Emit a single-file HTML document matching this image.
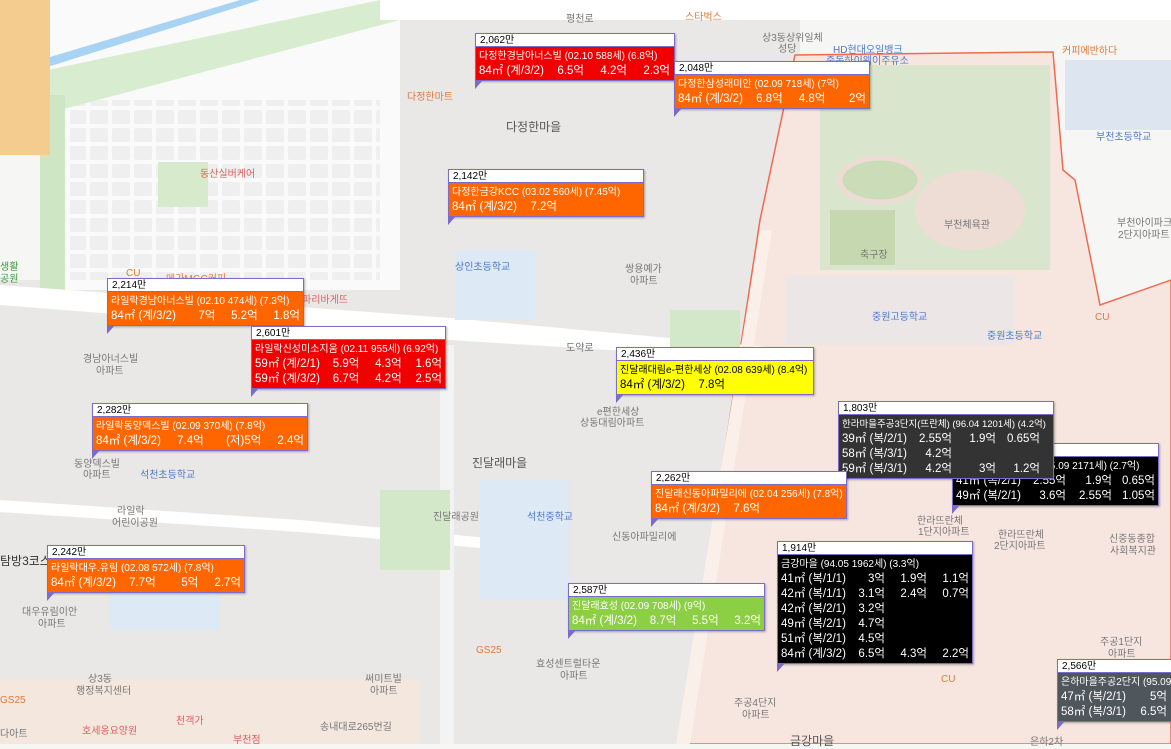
<!DOCTYPE html>
<html><head><meta charset="utf-8">
<style>
*{margin:0;padding:0;box-sizing:border-box}
body{width:1171px;height:744px;overflow:hidden;position:relative;background:#f6f6f5;font-family:"Liberation Sans","Noto Sans CJK KR",sans-serif}
svg{position:absolute;left:0;top:0}
.t{position:absolute;font-size:10px;color:#777;white-space:nowrap}
.tb{position:absolute;font-size:12px;color:#555;white-space:nowrap}
.b{position:absolute;border:1px solid #7a6cc8;box-shadow:1px 1px 2px rgba(0,0,0,.3)}
.b .h{background:#fff;color:#000;font-size:10px;height:13px;line-height:13px;padding-left:4px;border-bottom:1px solid #7a6cc8}
.b .c{padding:2px 3px 1px;color:#fff;font-size:10px;line-height:15px}
.b .r{display:flex;font-size:11.5px;line-height:15px;white-space:nowrap}
.b .r span{display:block;text-align:right}
.b .r span:first-child{text-align:left}
.b .ti{white-space:nowrap;overflow:hidden;font-size:10px}
.b:after{content:"";position:absolute;left:-1px;bottom:-9px;border-right:8px solid transparent;border-top:9px solid #7a6cc8}
</style></head><body>
<svg width="1171" height="744">
 <defs>
  <pattern id="blk" x="0" y="0" width="22" height="18" patternUnits="userSpaceOnUse">
   <rect x="2" y="2" width="18" height="14" rx="2" fill="#efefef"/>
  </pattern>
 </defs>
 <rect x="400" y="0" width="400" height="744" fill="#e9e8e6"/>
 <rect x="0" y="280" width="420" height="464" fill="#e9e8e6"/>
 <rect x="50" y="0" width="350" height="290" fill="#fafafa"/>
 <rect x="70" y="100" width="310" height="180" fill="url(#blk)"/>
 <polygon points="0,80 380,0 400,0 400,20 60,110 0,130" fill="#d8ecd0"/>
 <polygon points="0,72 240,0 260,0 0,82" fill="#a9d3f2"/>
 <rect x="40" y="95" width="25" height="200" fill="#cfe6c4"/>
 <rect x="0" y="0" width="50" height="155" fill="#f5cc8f"/>
 <rect x="158" y="162" width="50" height="45" fill="#d7ebcc"/>
 <polygon points="795,55 1053,52 1063,170 1075,180 1100,305 1171,280 1171,744 680,744 760,220" fill="#f7e6e0" stroke="#f06a50" stroke-width="1.5"/>
 <rect x="820" y="65" width="230" height="205" fill="#d9e5cc"/>
 <ellipse cx="970" cy="210" rx="55" ry="40" fill="#eeddd4"/>
 <ellipse cx="880" cy="180" rx="40" ry="22" fill="#cbdcb8" stroke="#eedcd4" stroke-width="5"/>
 <rect x="830" y="210" width="65" height="55" fill="#c5d8b0"/>
 <rect x="785" y="275" width="230" height="70" fill="#ece6e6"/>
 <rect x="1065" y="60" width="106" height="70" fill="#dde6f0"/>
 <polygon points="0,285 450,318 800,350 800,362 450,340 0,305" fill="#fff"/>
 <polygon points="0,500 300,520 560,545 560,555 300,532 0,512" fill="#fff"/>
 <rect x="380" y="0" width="800" height="20" fill="#fff"/>
 <polygon points="760,230 772,230 690,744 676,744" fill="#fbefea"/>
 <rect x="440" y="345" width="14" height="399" fill="#f3f3f3"/>
 <rect x="110" y="590" width="110" height="40" fill="#dde9f5"/>
 <rect x="480" y="480" width="90" height="120" fill="#dde9f5"/>
 <rect x="380" y="490" width="70" height="80" fill="#d3e8c8"/>
 <rect x="455" y="250" width="80" height="70" fill="#dde9f5"/>
 <rect x="670" y="310" width="70" height="40" fill="#d3e8c8"/>
 <rect x="0" y="680" width="420" height="64" fill="#f4e7de"/>
</svg>
<div class="t" style="left:566px;top:10px">평천로</div>
<div class="t" style="left:685px;top:8px;color:#e07a3a">스타벅스</div>
<div class="t" style="left:762px;top:29px">상3동상위일체</div>
<div class="t" style="left:778px;top:40px">성당</div>
<div class="t" style="left:833px;top:41px;color:#4a7ac8">HD현대오일뱅크</div>
<div class="t" style="left:826px;top:52px;color:#4a7ac8">중동하이웨이주유소</div>
<div class="t" style="left:1062px;top:42px;color:#e07a3a">커피에반하다</div>
<div class="t" style="left:1096px;top:128px;color:#4a7ac8">부천초등학교</div>
<div class="t" style="left:944px;top:216px">부천체육관</div>
<div class="t" style="left:860px;top:246px">축구장</div>
<div class="t" style="left:1117px;top:214px">부천아이파크</div>
<div class="t" style="left:1118px;top:226px">2단지아파트</div>
<div class="t" style="left:872px;top:308px;color:#4a7ac8">중원고등학교</div>
<div class="t" style="left:987px;top:327px;color:#4a7ac8">중원초등학교</div>
<div class="t" style="left:1095px;top:312px;color:#e07a3a">CU</div>
<div class="t" style="left:407px;top:88px;color:#e07a3a">다정한마트</div>
<div class="tb" style="left:506px;top:118px">다정한마을</div>
<div class="t" style="left:200px;top:165px;color:#e06060">동산실버케어</div>
<div class="t" style="left:455px;top:258px;color:#4a7ac8">상인초등학교</div>
<div class="t" style="left:625px;top:260px">쌍용예가</div>
<div class="t" style="left:630px;top:272px">아파트</div>
<div class="t" style="left:126px;top:268px;color:#e07a3a">CU</div>
<div class="t" style="left:166px;top:270px;color:#e07a3a">메가MGC커피</div>
<div class="t" style="left:302px;top:291px;color:#e06060">파리바게뜨</div>
<div class="t" style="left:83px;top:350px">경남아너스빌</div>
<div class="t" style="left:96px;top:362px">아파트</div>
<div class="t" style="left:566px;top:339px">도약로</div>
<div class="t" style="left:597px;top:403px">e편한세상</div>
<div class="t" style="left:580px;top:414px">상동대림아파트</div>
<div class="tb" style="left:472px;top:454px">진달래마을</div>
<div class="t" style="left:140px;top:466px;color:#4a7ac8">석천초등학교</div>
<div class="t" style="left:74px;top:455px">동양덱스빌</div>
<div class="t" style="left:83px;top:466px">아파트</div>
<div class="t" style="left:117px;top:502px">라일락</div>
<div class="t" style="left:112px;top:514px">어린이공원</div>
<div class="t" style="left:433px;top:508px">진달래공원</div>
<div class="t" style="left:527px;top:508px;color:#4a7ac8">석천중학교</div>
<div class="t" style="left:612px;top:528px">신동아파밀리에</div>
<div class="t" style="left:0px;top:552px;font-size:12px;color:#333">탐방3코스</div>
<div class="t" style="left:22px;top:603px">대우유림이안</div>
<div class="t" style="left:38px;top:615px">아파트</div>
<div class="t" style="left:536px;top:655px">효성센트럴타운</div>
<div class="t" style="left:560px;top:667px">아파트</div>
<div class="t" style="left:476px;top:645px;color:#e07a3a">GS25</div>
<div class="t" style="left:365px;top:670px">써미트빌</div>
<div class="t" style="left:370px;top:682px">아파트</div>
<div class="t" style="left:88px;top:670px">상3동</div>
<div class="t" style="left:76px;top:682px">행정복지센터</div>
<div class="t" style="left:82px;top:722px;color:#e06060">호세옹요양원</div>
<div class="t" style="left:176px;top:712px;color:#e06060">천객가</div>
<div class="t" style="left:233px;top:731px;color:#e06060">부천점</div>
<div class="t" style="left:320px;top:718px">송내대로265번길</div>
<div class="t" style="left:0px;top:695px;color:#e07a3a">GS25</div>
<div class="t" style="left:0px;top:725px">다아트</div>
<div class="t" style="left:734px;top:694px">주공4단지</div>
<div class="t" style="left:742px;top:706px">아파트</div>
<div class="t" style="left:941px;top:674px;color:#e07a3a">CU</div>
<div class="tb" style="left:790px;top:732px">금강마을</div>
<div class="t" style="left:917px;top:512px">한라뜨란체</div>
<div class="t" style="left:918px;top:523px">1단지아파트</div>
<div class="t" style="left:998px;top:526px">한라뜨란체</div>
<div class="t" style="left:994px;top:537px">2단지아파트</div>
<div class="t" style="left:1109px;top:530px">신중동종합</div>
<div class="t" style="left:1110px;top:542px">사회복지관</div>
<div class="t" style="left:1100px;top:633px">주공1단지</div>
<div class="t" style="left:1108px;top:645px">아파트</div>
<div class="t" style="left:1030px;top:733px">은하2차</div>
<div class="t" style="left:0px;top:258px;color:#3a9a3a">생활</div>
<div class="t" style="left:0px;top:270px;color:#3a9a3a">공원</div>

<div class="b" style="left:475px;top:33px;width:200px;background:#f00000"><div class="h">2,062만</div><div class="c"><div class="ti">다정한경남아너스빌 (02.10 588세) (6.8억)</div>
<div class="r"><span style="width:62px">84㎡ (계/3/2)</span><span style="width:43px">6.5억</span><span style="width:43px">4.2억</span><span style="width:43px">2.3억</span></div></div></div>

<div class="b" style="left:674px;top:61px;width:196px;background:#ff6600"><div class="h">2,048만</div><div class="c"><div class="ti">다정한삼성래미안 (02.09 718세) (7억)</div>
<div class="r"><span style="width:62px">84㎡ (계/3/2)</span><span style="width:43px">6.8억</span><span style="width:43px">4.8억</span><span style="width:41px">2억</span></div></div></div>

<div class="b" style="left:448px;top:169px;width:196px;background:#ff6600"><div class="h">2,142만</div><div class="c"><div class="ti">다정한금강KCC (03.02 560세) (7.45억)</div>
<div class="r"><span style="width:62px">84㎡ (계/3/2)</span><span style="width:43px">7.2억</span></div></div></div>

<div class="b" style="left:107px;top:278px;width:197px;background:#ff6600"><div class="h">2,214만</div><div class="c"><div class="ti">라일락경남아너스빌 (02.10 474세) (7.3억)</div>
<div class="r"><span style="width:62px">84㎡ (계/3/2)</span><span style="width:43px">7억</span><span style="width:43px">5.2억</span><span style="width:43px">1.8억</span></div></div></div>

<div class="b" style="left:251px;top:326px;width:195px;background:#f00000"><div class="h">2,601만</div><div class="c"><div class="ti">라일락신성미소지움 (02.11 955세) (6.92억)</div>
<div class="r"><span style="width:62px">59㎡ (계/2/1)</span><span style="width:43px">5.9억</span><span style="width:43px">4.3억</span><span style="width:41px">1.6억</span></div>
<div class="r"><span style="width:62px">59㎡ (계/3/2)</span><span style="width:43px">6.7억</span><span style="width:43px">4.2억</span><span style="width:41px">2.5억</span></div></div></div>

<div class="b" style="left:616px;top:347px;width:198px;background:#ffff00"><div class="h">2,436만</div><div class="c" style="color:#000"><div class="ti">진달래대림e-편한세상 (02.08 639세) (8.4억)</div>
<div class="r"><span style="width:62px">84㎡ (계/3/2)</span><span style="width:43px">7.8억</span></div></div></div>

<div class="b" style="left:92px;top:403px;width:216px;background:#ff6600"><div class="h">2,282만</div><div class="c"><div class="ti">라일락동양덱스빌 (02.09 370세) (7.8억)</div>
<div class="r"><span style="width:62px">84㎡ (계/3/2)</span><span style="width:46px">7.4억</span><span style="width:58px">(저)5억</span><span style="width:43px">2.4억</span></div></div></div>

<div class="b" style="left:952px;top:443px;width:207px;background:#000"><div class="h">&nbsp;</div><div class="c"><div class="ti" style="padding-left:85px">(95.09 2171세) (2.7억)</div>
<div class="r"><span style="width:64px">41㎡ (복/2/1)</span><span style="width:46px">2.55억</span><span style="width:46px">1.9억</span><span style="width:43px">0.65억</span></div>
<div class="r"><span style="width:64px">49㎡ (복/2/1)</span><span style="width:46px">3.6억</span><span style="width:46px">2.55억</span><span style="width:43px">1.05억</span></div></div></div>

<div class="b" style="left:838px;top:401px;width:216px;background:#333"><div class="h">1,803만</div><div class="c"><div class="ti" style="font-size:9.5px">한라마을주공3단지(뜨란체) (96.04 1201세) (4.2억)</div>
<div class="r"><span style="width:66px">39㎡ (복/2/1)</span><span style="width:44px">2.55억</span><span style="width:44px">1.9억</span><span style="width:44px">0.65억</span></div>
<div class="r"><span style="width:66px">58㎡ (복/3/1)</span><span style="width:44px">4.2억</span></div>
<div class="r"><span style="width:66px">59㎡ (복/3/1)</span><span style="width:44px">4.2억</span><span style="width:44px">3억</span><span style="width:44px">1.2억</span></div></div></div>

<div class="b" style="left:651px;top:471px;width:196px;background:#ff6600"><div class="h">2,262만</div><div class="c"><div class="ti">진달래신동아파밀리에 (02.04 256세) (7.8억)</div>
<div class="r"><span style="width:62px">84㎡ (계/3/2)</span><span style="width:43px">7.6억</span></div></div></div>

<div class="b" style="left:47px;top:545px;width:198px;background:#ff6600"><div class="h">2,242만</div><div class="c"><div class="ti">라일락대우.유림 (02.08 572세) (7.8억)</div>
<div class="r"><span style="width:62px">84㎡ (계/3/2)</span><span style="width:43px">7.7억</span><span style="width:43px">5억</span><span style="width:43px">2.7억</span></div></div></div>

<div class="b" style="left:777px;top:541px;width:196px;background:#000"><div class="h">1,914만</div><div class="c"><div class="ti">금강마을 (94.05 1962세) (3.3억)</div>
<div class="r"><span style="width:62px">41㎡ (복/1/1)</span><span style="width:42px">3억</span><span style="width:42px">1.9억</span><span style="width:42px">1.1억</span></div>
<div class="r"><span style="width:62px">42㎡ (복/1/1)</span><span style="width:42px">3.1억</span><span style="width:42px">2.4억</span><span style="width:42px">0.7억</span></div>
<div class="r"><span style="width:62px">42㎡ (복/2/1)</span><span style="width:42px">3.2억</span></div>
<div class="r"><span style="width:62px">49㎡ (복/2/1)</span><span style="width:42px">4.7억</span></div>
<div class="r"><span style="width:62px">51㎡ (복/2/1)</span><span style="width:42px">4.5억</span></div>
<div class="r"><span style="width:62px">84㎡ (계/3/2)</span><span style="width:42px">6.5억</span><span style="width:42px">4.3억</span><span style="width:42px">2.2억</span></div></div></div>

<div class="b" style="left:568px;top:583px;width:197px;background:#8ccf45"><div class="h">2,587만</div><div class="c"><div class="ti">진달래효성 (02.09 708세) (9억)</div>
<div class="r"><span style="width:62px">84㎡ (계/3/2)</span><span style="width:43px">8.7억</span><span style="width:43px">5.5억</span><span style="width:43px">3.2억</span></div></div></div>

<div class="b" style="left:1057px;top:659px;width:130px;background:#4f565c"><div class="h">2,566만</div><div class="c"><div class="ti">은하마을주공2단지 (95.09 -</div>
<div class="r"><span style="width:64px">47㎡ (복/2/1)</span><span style="width:42px">5억</span></div>
<div class="r"><span style="width:64px">58㎡ (복/3/1)</span><span style="width:42px">6.5억</span></div></div></div>
</body></html>
